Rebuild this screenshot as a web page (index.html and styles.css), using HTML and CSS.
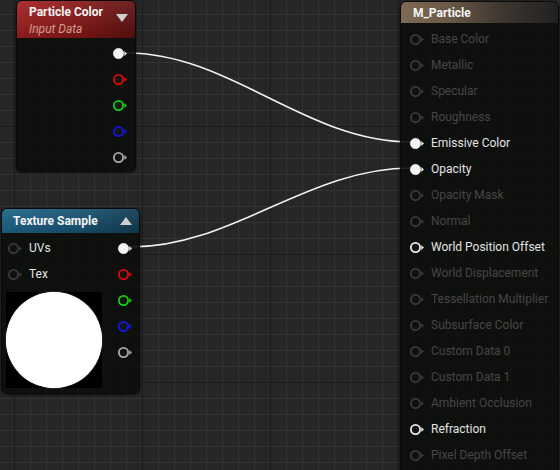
FILE: index.html
```html
<!DOCTYPE html>
<html>
<head>
<meta charset="utf-8">
<link rel="stylesheet" href="styles.css">
</head>
<body>
<div class="canvas">
  <svg class="wires" width="560" height="470" viewBox="0 0 560 470">
    <path d="M127,53 C230,53 306,142 411,142" />
    <path d="M131,247 C232,247 308,168 411,168" />
  </svg>

  <div class="node node-particle">
    <div class="hdr hdr-red">
      <div class="titles">
        <div class="title">Particle Color</div>
        <div class="subtitle">Input Data</div>
      </div>
      <svg class="tri" width="12" height="8" viewBox="0 0 12 8"><polygon points="0,0 12,0 6,8"/></svg>
    </div>
    <div class="col out">
      <div class="row"><svg class="pin" width="16" height="13" viewBox="0 0 16 13"><circle cx="6.5" cy="6.5" r="5.2" class="fill-w"/><polygon points="12.3,4 15,6.5 12.3,9" class="tw"/></svg></div>
      <div class="row"><svg class="pin" width="16" height="13" viewBox="0 0 16 13"><circle cx="6.5" cy="6.5" r="4.6" class="ring-r"/><polygon points="12.3,4 15,6.5 12.3,9" class="tr"/></svg></div>
      <div class="row"><svg class="pin" width="16" height="13" viewBox="0 0 16 13"><circle cx="6.5" cy="6.5" r="4.6" class="ring-g"/><polygon points="12.3,4 15,6.5 12.3,9" class="tg"/></svg></div>
      <div class="row"><svg class="pin" width="16" height="13" viewBox="0 0 16 13"><circle cx="6.5" cy="6.5" r="4.6" class="ring-b"/><polygon points="12.3,4 15,6.5 12.3,9" class="tb"/></svg></div>
      <div class="row"><svg class="pin" width="16" height="13" viewBox="0 0 16 13"><circle cx="6.5" cy="6.5" r="4.6" class="ring-a"/><polygon points="12.3,4 15,6.5 12.3,9" class="ta"/></svg></div>
    </div>
  </div>

  <div class="node node-texture">
    <div class="hdr hdr-blue">
      <div class="title">Texture Sample</div>
      <svg class="tri" width="12" height="8" viewBox="0 0 12 8"><polygon points="0,8 12,8 6,0"/></svg>
    </div>
    <div class="tex-body">
      <div class="col in">
        <div class="row"><svg class="pin" width="16" height="13" viewBox="0 0 16 13"><circle cx="6.5" cy="6.5" r="4.6" class="ring-d"/><polygon points="12.3,4 15,6.5 12.3,9" class="td"/></svg><span class="lbl on">UVs</span></div>
        <div class="row"><svg class="pin" width="16" height="13" viewBox="0 0 16 13"><circle cx="6.5" cy="6.5" r="4.6" class="ring-d"/><polygon points="12.3,4 15,6.5 12.3,9" class="td"/></svg><span class="lbl on">Tex</span></div>
        <div class="preview"><div class="dot"></div></div>
      </div>
      <div class="col out">
        <div class="row"><svg class="pin" width="16" height="13" viewBox="0 0 16 13"><circle cx="6.5" cy="6.5" r="5.2" class="fill-w"/><polygon points="12.3,4 15,6.5 12.3,9" class="tw"/></svg></div>
        <div class="row"><svg class="pin" width="16" height="13" viewBox="0 0 16 13"><circle cx="6.5" cy="6.5" r="4.6" class="ring-r"/><polygon points="12.3,4 15,6.5 12.3,9" class="tr"/></svg></div>
        <div class="row"><svg class="pin" width="16" height="13" viewBox="0 0 16 13"><circle cx="6.5" cy="6.5" r="4.6" class="ring-g"/><polygon points="12.3,4 15,6.5 12.3,9" class="tg"/></svg></div>
        <div class="row"><svg class="pin" width="16" height="13" viewBox="0 0 16 13"><circle cx="6.5" cy="6.5" r="4.6" class="ring-b"/><polygon points="12.3,4 15,6.5 12.3,9" class="tb"/></svg></div>
        <div class="row"><svg class="pin" width="16" height="13" viewBox="0 0 16 13"><circle cx="6.5" cy="6.5" r="4.6" class="ring-a"/><polygon points="12.3,4 15,6.5 12.3,9" class="ta"/></svg></div>
      </div>
    </div>
  </div>

  <div class="node node-material">
    <div class="hdr hdr-brown">
      <div class="title">M_Particle</div>
    </div>
    <div class="col in mat">
      <div class="row"><svg class="pin" width="16" height="13" viewBox="0 0 16 13"><circle cx="6.5" cy="6.5" r="4.6" class="ring-d"/><polygon points="12.3,4 15,6.5 12.3,9" class="td"/></svg><span class="lbl off">Base Color</span></div>
      <div class="row"><svg class="pin" width="16" height="13" viewBox="0 0 16 13"><circle cx="6.5" cy="6.5" r="4.6" class="ring-d"/><polygon points="12.3,4 15,6.5 12.3,9" class="td"/></svg><span class="lbl off">Metallic</span></div>
      <div class="row"><svg class="pin" width="16" height="13" viewBox="0 0 16 13"><circle cx="6.5" cy="6.5" r="4.6" class="ring-d"/><polygon points="12.3,4 15,6.5 12.3,9" class="td"/></svg><span class="lbl off">Specular</span></div>
      <div class="row"><svg class="pin" width="16" height="13" viewBox="0 0 16 13"><circle cx="6.5" cy="6.5" r="4.6" class="ring-d"/><polygon points="12.3,4 15,6.5 12.3,9" class="td"/></svg><span class="lbl off">Roughness</span></div>
      <div class="row"><svg class="pin" width="16" height="13" viewBox="0 0 16 13"><circle cx="6.5" cy="6.5" r="5.2" class="fill-w"/><polygon points="12.3,4 15,6.5 12.3,9" class="tw"/></svg><span class="lbl on">Emissive Color</span></div>
      <div class="row"><svg class="pin" width="16" height="13" viewBox="0 0 16 13"><circle cx="6.5" cy="6.5" r="5.2" class="fill-w"/><polygon points="12.3,4 15,6.5 12.3,9" class="tw"/></svg><span class="lbl on">Opacity</span></div>
      <div class="row"><svg class="pin" width="16" height="13" viewBox="0 0 16 13"><circle cx="6.5" cy="6.5" r="4.6" class="ring-d"/><polygon points="12.3,4 15,6.5 12.3,9" class="td"/></svg><span class="lbl off">Opacity Mask</span></div>
      <div class="row"><svg class="pin" width="16" height="13" viewBox="0 0 16 13"><circle cx="6.5" cy="6.5" r="4.6" class="ring-d"/><polygon points="12.3,4 15,6.5 12.3,9" class="td"/></svg><span class="lbl off">Normal</span></div>
      <div class="row"><svg class="pin" width="16" height="13" viewBox="0 0 16 13"><circle cx="6.5" cy="6.5" r="4.6" class="ring-w"/><polygon points="12.3,4 15,6.5 12.3,9" class="tw"/></svg><span class="lbl on">World Position Offset</span></div>
      <div class="row"><svg class="pin" width="16" height="13" viewBox="0 0 16 13"><circle cx="6.5" cy="6.5" r="4.6" class="ring-d"/><polygon points="12.3,4 15,6.5 12.3,9" class="td"/></svg><span class="lbl off">World Displacement</span></div>
      <div class="row"><svg class="pin" width="16" height="13" viewBox="0 0 16 13"><circle cx="6.5" cy="6.5" r="4.6" class="ring-d"/><polygon points="12.3,4 15,6.5 12.3,9" class="td"/></svg><span class="lbl off">Tessellation Multiplier</span></div>
      <div class="row"><svg class="pin" width="16" height="13" viewBox="0 0 16 13"><circle cx="6.5" cy="6.5" r="4.6" class="ring-d"/><polygon points="12.3,4 15,6.5 12.3,9" class="td"/></svg><span class="lbl off">Subsurface Color</span></div>
      <div class="row"><svg class="pin" width="16" height="13" viewBox="0 0 16 13"><circle cx="6.5" cy="6.5" r="4.6" class="ring-d"/><polygon points="12.3,4 15,6.5 12.3,9" class="td"/></svg><span class="lbl off">Custom Data 0</span></div>
      <div class="row"><svg class="pin" width="16" height="13" viewBox="0 0 16 13"><circle cx="6.5" cy="6.5" r="4.6" class="ring-d"/><polygon points="12.3,4 15,6.5 12.3,9" class="td"/></svg><span class="lbl off">Custom Data 1</span></div>
      <div class="row"><svg class="pin" width="16" height="13" viewBox="0 0 16 13"><circle cx="6.5" cy="6.5" r="4.6" class="ring-d"/><polygon points="12.3,4 15,6.5 12.3,9" class="td"/></svg><span class="lbl off">Ambient Occlusion</span></div>
      <div class="row"><svg class="pin" width="16" height="13" viewBox="0 0 16 13"><circle cx="6.5" cy="6.5" r="4.6" class="ring-w"/><polygon points="12.3,4 15,6.5 12.3,9" class="tw"/></svg><span class="lbl on">Refraction</span></div>
      <div class="row"><svg class="pin" width="16" height="13" viewBox="0 0 16 13"><circle cx="6.5" cy="6.5" r="4.6" class="ring-d"/><polygon points="12.3,4 15,6.5 12.3,9" class="td"/></svg><span class="lbl off">Pixel Depth Offset</span></div>
    </div>
  </div>
</div>
</body>
</html>
```

FILE: styles.css
```css
* { box-sizing: border-box; }
html, body {
  margin: 0;
  padding: 0;
  width: 560px;
  height: 470px;
  overflow: hidden;
  background: #262626;
}
.canvas {
  position: relative;
  width: 560px;
  height: 470px;
  overflow: hidden;
  font-family: Roboto, "Noto Sans", sans-serif;
  font-size: 12px;
  background-color: #262626;
  background-image:
    linear-gradient(to right, #1a1a1a 1px, transparent 1px),
    linear-gradient(to bottom, #1a1a1a 1px, transparent 1px),
    linear-gradient(to right, #333333 1px, transparent 1px),
    linear-gradient(to bottom, #333333 1px, transparent 1px);
  background-size: 128px 128px, 128px 128px, 16px 16px, 16px 16px;
  background-position: 14px 0, 0 126px, 14px 0, 0 14px;
}
.wires {
  position: absolute;
  left: 0;
  top: 0;
}
.wires path {
  fill: none;
  stroke: #f2f2f2;
  stroke-width: 1.6;
}
.node {
  position: absolute;
  background: rgba(12, 14, 12, 0.9);
  border: 1px solid #0a0a0a;
  border-radius: 6px;
  box-shadow: 0 1px 3px rgba(0,0,0,0.6);
  overflow: hidden;
}
.node-particle { left: 16px; top: 0; width: 120px; height: 172px; }
.node-texture { left: 1px; top: 208px; width: 139px; height: 186px; }
.node-material { left: 400px; top: 1px; width: 159px; height: 480px; }

.hdr {
  display: flex;
  align-items: center;
  justify-content: space-between;
  color: #fff;
}
.title {
  font-weight: bold;
  font-size: 12px;
  color: #f4f4f4;
  line-height: 14px;
}
.subtitle {
  font-style: italic;
  font-size: 12px;
  color: #d0a090;
  line-height: 14px;
  margin-top: 3px;
}
.tri polygon { fill: #d0d0d0; }

.hdr-red {
  height: 37px;
  padding: 4px 7px 0 12px;
  align-items: flex-start;
  background:
    linear-gradient(to bottom, rgba(255,255,255,0.08), rgba(0,0,0,0.15)),
    linear-gradient(to right, #a31f1f 0%, #8c1818 45%, #5e1010 100%);
}
.hdr-red .tri { margin-top: 9px; }

.hdr-blue {
  height: 24px;
  padding: 0 7px 0 11px;
  background:
    linear-gradient(to bottom, rgba(255,255,255,0.07), rgba(0,0,0,0.12)),
    linear-gradient(to right, #1d6288 0%, #175373 55%, #113b52 100%);
}

.hdr-brown {
  height: 21px;
  padding: 0 12px;
  background: linear-gradient(to right, #7e6a55 0%, #6a5947 30%, #3d3630 65%, #222120 100%);
}

.col { display: flex; flex-direction: column; }
.row {
  height: 26px;
  display: flex;
  align-items: center;
}
.pin { display: block; flex: none; }
.lbl { margin-left: 6px; white-space: nowrap; }
.lbl.on { color: #e4e4e4; }
.lbl.off { color: #464646; }

.node-particle .col.out {
  padding: 2px 7px 0 0;
  align-items: flex-end;
}

.tex-body {
  display: flex;
  justify-content: space-between;
  padding-top: 2px;
}
.tex-body .col.in { padding-left: 5px; }
.tex-body .col.out { padding-right: 6px; align-items: flex-end; }
.preview {
  width: 96px;
  height: 96px;
  margin-top: 5px;
  margin-left: -1px;
  background: #000;
  display: flex;
  align-items: center;
  justify-content: center;
}
.dot {
  width: 96px;
  height: 96px;
  border-radius: 50%;
  background: #fff;
  box-shadow: 0 0 1px #fff;
}

.mat { padding: 3px 0 0 8px; }

.fill-w { fill: #f4f4f4; stroke: #f4f4f4; stroke-width: 0.5; }
.ring-w { fill: #141414; stroke: #e8e8e8; stroke-width: 1.8; }
.ring-r { fill: #141414; stroke: #e00a0a; stroke-width: 1.8; }
.ring-g { fill: #141414; stroke: #10d010; stroke-width: 1.8; }
.ring-b { fill: #141414; stroke: #1515e0; stroke-width: 1.8; }
.ring-a { fill: #141414; stroke: #a8a8a8; stroke-width: 1.8; }
.ring-d { fill: #101010; stroke: #3a3a3a; stroke-width: 1.8; }
.tw { fill: #e8e8e8; }
.tr { fill: #e00a0a; }
.tg { fill: #10d010; }
.tb { fill: #1515e0; }
.ta { fill: #a8a8a8; }
.td { fill: #3a3a3a; }
```
